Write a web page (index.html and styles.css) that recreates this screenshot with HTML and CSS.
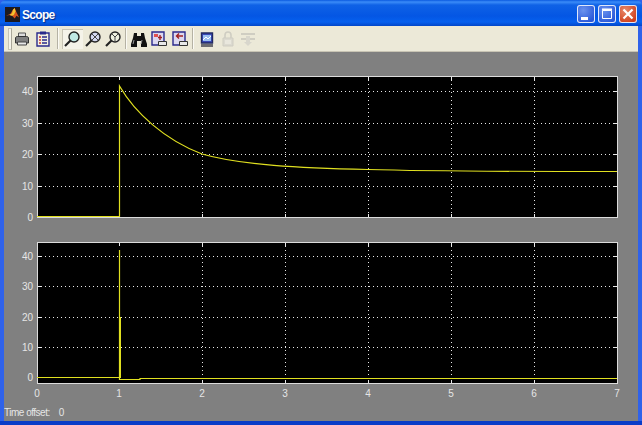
FILE: index.html
```html
<!DOCTYPE html>
<html>
	<head>
		<meta charset="utf-8">
		<title>Scope</title>
		<link rel="stylesheet" href="styles.css">
	</head>
	<body>
		<div id="main">
			<div class="titlebar">
				<svg class="logo" width="15" height="15" viewBox="0 0 17 17">
					<rect width="17" height="17" fill="#1c1a20"/>
					<path d="M1 10 L6 8 L9 3 L11 1 L13 6 L16 12 L13 10 L11 13 L8 10 L5 9 Z" fill="#d8531c"/>
					<path d="M9 3 L11 1 L12 5 L10 9 L8 10 L5 9 L8 7 Z" fill="#f4c430"/>
				</svg>
				<span class="title">Scope</span>
				<div class="winbtns">
					<div class="winbtn">
						<svg width="18" height="18" viewBox="0 0 18 18"><rect x="4" y="12" width="7" height="3" fill="#fff"/></svg>
					</div>
					<div class="winbtn">
						<svg width="18" height="18" viewBox="0 0 18 18"><path d="M4.5 5.500h9v8h-9z" fill="none" stroke="#fff"/><path d="M4 4.500h10" stroke="#fff" stroke-width="2"/></svg>
					</div>
					<div class="winbtn close">
						<svg width="18" height="18" viewBox="0 0 18 18"><path d="M4.500 4.500l9 9M13.500 4.500l-9 9" stroke="#fff" stroke-width="2.2"/></svg>
					</div>
				</div>
			</div>

			<div class="toolbar">
				<div class="grip"></div>
				<div class="tool">
					<svg width="18" height="18" viewBox="0 0 18 18">
						<path d="M5.500 3h7v4h-7z" fill="#dcdcdc" stroke="#555"/>
						<path d="M2.500 8c0-1 1-1.500 2-1.500h9c1 0 2 .5 2 1.500v5h-13z" fill="#808080" stroke="#333"/>
						<path d="M4.500 12h9v3h-9z" fill="#e8e8e8" stroke="#444"/>
					</svg>
				</div>
				<div class="tool">
					<svg width="18" height="18" viewBox="0 0 18 18">
						<path d="M3 3h12v13H3z" fill="#f4f0e0" stroke="#2a2a8c" stroke-width="1.4"/>
						<path d="M6 1.500h6v3H6z" fill="#2a2a8c"/>
						<path d="M5 7h2M5 10h2M5 13h2" stroke="#c03030" stroke-width="1.4"/>
						<path d="M8 7h5M8 10h5M8 13h5" stroke="#2a2a8c" stroke-width="1.4"/>
					</svg>
				</div>
				<div class="sep"></div>
				<div class="tool pressed">
					<svg width="18" height="18" viewBox="0 0 18 18">
						<circle cx="11" cy="7" r="5" fill="#bfe8e4" stroke="#222" stroke-width="1.4"/>
						<path d="M7.500 10.500L2 16" stroke="#222" stroke-width="2.2"/>
					</svg>
				</div>
				<div class="tool">
					<svg width="18" height="18" viewBox="0 0 18 18">
						<circle cx="11" cy="7" r="5" fill="#d4d8f0" stroke="#222" stroke-width="1.4"/>
						<path d="M8 4l6 6M14 4l-6 6" stroke="#444"/>
						<path d="M7.500 10.500L2 16" stroke="#222" stroke-width="2.2"/>
					</svg>
				</div>
				<div class="tool">
					<svg width="18" height="18" viewBox="0 0 18 18">
						<circle cx="11" cy="7" r="5" fill="#eef0e0" stroke="#222" stroke-width="1.4"/>
						<path d="M7.500 3.500L11 7l3.500-3.500M11 7v5" fill="none" stroke="#444"/>
						<path d="M7.500 10.500L2 16" stroke="#222" stroke-width="2.2"/>
					</svg>
				</div>
				<div class="sep tight"></div>
				<div class="tool">
					<svg width="18" height="18" viewBox="0 0 18 18">
						<path d="M4 3h3v3h4V3h3l1 5 2 6v3h-6v-6H7v6H1v-3l2-6z" fill="#111"/>
						<path d="M4 10l-1 4M12 10l-1 4" stroke="#999"/>
					</svg>
				</div>
				<div class="tool">
					<svg width="18" height="18" viewBox="0 0 18 18">
						<path d="M2 2h12v13H2z" fill="#dcd8f0" stroke="#2a2a8c" stroke-width="1.4"/>
						<path d="M4 4h4v3H4z" fill="#e05050"/>
						<path d="M10 5v5M8 7.500h4" stroke="#a02020" stroke-width="1.4"/>
						<path d="M8.500 11.500h8v4h-8z" fill="#e8e8e8" stroke="#333"/>
					</svg>
				</div>
				<div class="tool">
					<svg width="18" height="18" viewBox="0 0 18 18">
						<path d="M2 2h12v13H2z" fill="#dcd8f0" stroke="#2a2a8c" stroke-width="1.4"/>
						<path d="M12 6H6M8 3.500L5.500 6 8 8.500" fill="none" stroke="#a02020" stroke-width="1.4"/>
						<path d="M8.500 11.500h8v4h-8z" fill="#e8e8e8" stroke="#333"/>
					</svg>
				</div>
				<div class="sep wide"></div>
				<div class="tool">
					<svg width="18" height="18" viewBox="0 0 18 18">
						<path d="M3.500 3h11v10h-11z" fill="#3a4ab8" stroke="#222a60" stroke-width="1.4"/>
						<path d="M5 5h8v6H5z" fill="#9cc0f0"/>
						<path d="M5 10l3-3 2 2 3-3" fill="none" stroke="#fff"/>
						<path d="M3 14h12v3H3z" fill="#6c6c70"/>
					</svg>
				</div>
				<div class="tool">
					<svg width="18" height="18" viewBox="0 0 18 18">
						<path d="M6 8V5a3 3 0 0 1 6 0v3" fill="none" stroke="#cfcdc2" stroke-width="1.6"/>
						<path d="M4 8h10v8H4z" fill="#dcdad0" stroke="#cfcdc2"/>
						<path d="M6 11h6M6 13h6" stroke="#f6f4ea"/>
					</svg>
				</div>
				<div class="tool">
					<svg width="18" height="18" viewBox="0 0 18 18">
						<path d="M2 4h14M2 9h5M11 9h5" stroke="#cfcdc2" stroke-width="2"/>
						<path d="M7 6h4v6l2 0-4 4-4-4h2z" fill="#d8d6cc"/>
					</svg>
				</div>
			</div>

			<div class="scope">
				<svg class="axes" width="634" height="160" viewBox="4 70 634 160">
					<rect x="37" y="76" width="581" height="142" fill="#000"/>
					<path class="grid" d="M37 91.500H618M37 123.500H618M37 154.500H618M37 186.500H618M202.500 76V218M285.500 76V218M368.500 76V218M451.500 76V218M534.500 76V218"/>
					<path class="tick" d="M119.500 76v4M202.500 76v4M285.500 76v4M368.500 76v4M451.500 76v4M534.500 76v4M202.500 218v-4M285.500 218v-4M368.500 218v-4M451.500 218v-4M534.500 218v-4M37 91.500h4M37 123.500h4M37 154.500h4M37 186.500h4M618 91.500h-4M618 123.500h-4M618 154.500h-4M618 186.500h-4"/>
					<rect class="frame" x="37.500" y="76.500" width="580" height="141"/>
					<path class="trace" d="M37 216.500H119.500V86C135 113 165 140 202 154C240 165 300 168 368 169.500C420 171 500 171.500 617 171.500"/>
					<text class="ytick" x="33" y="95">40</text>
					<text class="ytick" x="33" y="127">30</text>
					<text class="ytick" x="33" y="158">20</text>
					<text class="ytick" x="33" y="190">10</text>
					<text class="ytick" x="33" y="221">0</text>
				</svg>
				<svg class="axes" width="634" height="165" viewBox="4 236 634 165">
					<rect x="37" y="242" width="581" height="142" fill="#000"/>
					<path class="grid" d="M37 256.500H618M37 286.500H618M37 317.500H618M37 347.500H618M202.500 242V384M285.500 242V384M368.500 242V384M451.500 242V384M534.500 242V384"/>
					<path class="tick" d="M119.500 242v4M202.500 242v4M285.500 242v4M368.500 242v4M451.500 242v4M534.500 242v4M202.500 384v-4M285.500 384v-4M368.500 384v-4M451.500 384v-4M534.500 384v-4M37 256.500h4M37 286.500h4M37 317.500h4M37 347.500h4M618 256.500h-4M618 286.500h-4M618 317.500h-4M618 347.500h-4"/>
					<rect class="frame" x="37.500" y="242.500" width="580" height="141"/>
					<path class="trace" d="M37 377.500H119.500V250V379.500H140V378.500H617"/>
					<path class="trace thick" d="M120 317V378"/>
					<text class="ytick" x="33" y="260">40</text>
					<text class="ytick" x="33" y="290">30</text>
					<text class="ytick" x="33" y="321">20</text>
					<text class="ytick" x="33" y="351">10</text>
					<text class="ytick" x="33" y="381">0</text>
					<text class="xtick" x="37" y="397">0</text>
					<text class="xtick" x="119" y="397">1</text>
					<text class="xtick" x="202" y="397">2</text>
					<text class="xtick" x="285" y="397">3</text>
					<text class="xtick" x="368" y="397">4</text>
					<text class="xtick" x="451" y="397">5</text>
					<text class="xtick" x="534" y="397">6</text>
					<text class="xtick" x="617" y="397">7</text>
				</svg>
				<div class="status">
					<span>Time offset:</span>
					<span>0</span>
				</div>
			</div>
			<div class="bottom-edge"></div>
		</div>
	</body>
</html>
```

FILE: styles.css
```css
html, body {
	margin: 0;
	padding: 0;
	background: #2f62ea;
	overflow: hidden;
}

#main {
	width: 642px;
	height: 425px;
	display: flex;
	flex-direction: column;
	font-family: "Liberation Sans", Arial, sans-serif;
}

.titlebar {
	height: 26px;
	flex: none;
	display: flex;
	align-items: center;
	padding: 2px 5px 0 5px;
	box-sizing: border-box;
	border-radius: 6px 6px 0 0;
	background: linear-gradient(#0a5ae0 0, #3b8cf8 2px, #0f62e6 5px, #0456e4 16px, #0660ee 22px, #0246c8 26px);
}

.logo {
	margin-right: 2px;
}

.title {
	color: #fff;
	font-size: 12px;
	font-weight: bold;
	letter-spacing: -0.7px;
	margin-top: 2px;
	text-shadow: 1px 1px 1px #0a2a80;
}

.winbtns {
	margin-left: auto;
	display: flex;
	gap: 3px;
}

.winbtn {
	width: 18px;
	height: 18px;
	border-radius: 3px;
	box-sizing: border-box;
	box-shadow: inset 0 0 0 1px #dfe8fb;
	background: radial-gradient(circle at 35% 30%, #6a92ee, #2a58d8 75%);
	overflow: hidden;
}

.close {
	background: radial-gradient(circle at 35% 30%, #e8896a, #cf3f1c 75%);
}

.toolbar {
	height: 26px;
	flex: none;
	margin: 0 4px;
	padding-left: 4px;
	display: flex;
	align-items: center;
	box-sizing: border-box;
	background: #ece9d8;
	border-bottom: 1px solid #c8c4b4;
}

.grip {
	width: 2px;
	height: 20px;
	border: 1px solid #c8c5b6;
	border-right-color: #aaa79a;
	background: #f6f4ea;
}

.tool {
	width: 20.500px;
	height: 20px;
	display: flex;
	align-items: center;
	justify-content: center;
	box-sizing: border-box;
}

.tool svg {
	filter: blur(0.3px);
}

.pressed {
	background: #f5f3e9;
	box-shadow: inset 1px 1px 0 #c8c5b6;
}

.sep {
	width: 1px;
	height: 21px;
	background: #b5b2a4;
	border-right: 1px solid #fbfaf4;
	margin: 0 3px 0 4px;
}

.tight {
	margin: 0 2px 0 1px;
}

.wide {
	margin: 0 3px 0 2px;
}

.scope {
	flex: 1;
	min-height: 0;
	margin: 0 4px;
	padding-top: 18px;
	display: flex;
	flex-direction: column;
	gap: 6px;
	background: #808080;
	box-sizing: border-box;
}

.axes {
	display: block;
	flex: none;
}

.axes text {
	fill: #e6e6e6;
	font-size: 10px;
}

.ytick {
	text-anchor: end;
}

.xtick {
	text-anchor: middle;
}

.grid {
	fill: none;
	stroke: #e8e8e8;
	stroke-dasharray: 1 3;
}

.tick {
	fill: none;
	stroke: #e8e8e8;
}

.frame {
	fill: none;
	stroke: #dcdcdc;
}

.trace {
	fill: none;
	stroke: #e0e020;
	stroke-width: 1.2;
}

.thick {
	stroke-width: 2;
}

.status {
	display: flex;
	gap: 9px;
	margin-top: -3px;
	color: #e6e6e6;
	font-size: 10px;
	letter-spacing: -0.5px;
	height: 16px;
	align-items: center;
}

.bottom-edge {
	height: 4px;
	flex: none;
	background: #0a3cc8;
}
```
